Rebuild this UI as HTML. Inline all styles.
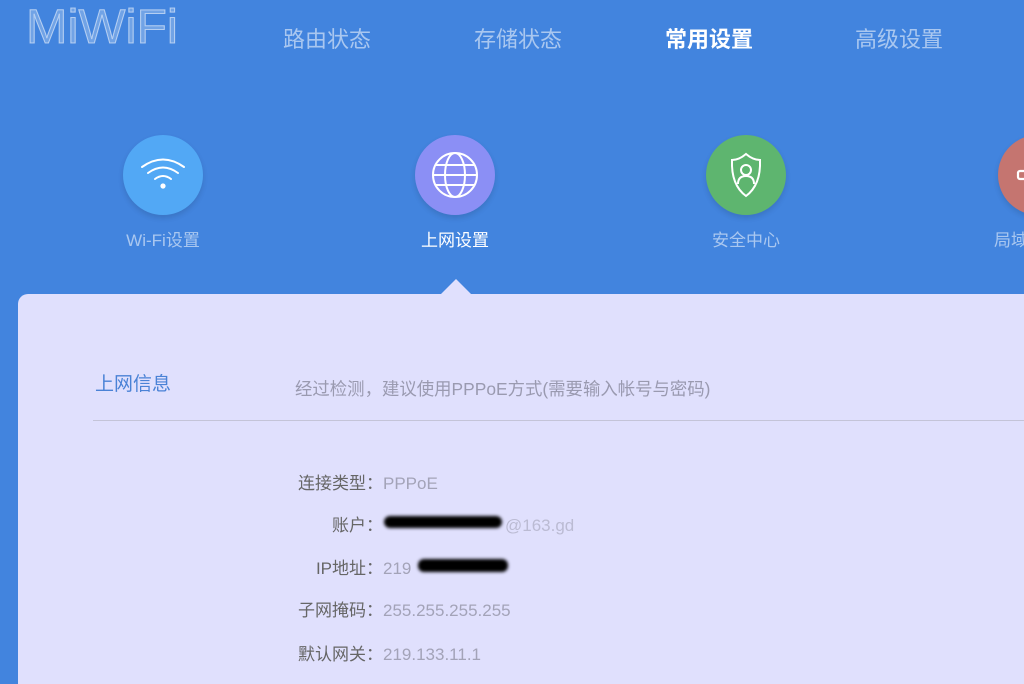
<!DOCTYPE html>
<html><head><meta charset="utf-8"><style>
*{margin:0;padding:0;box-sizing:border-box}
html,body{width:1024px;height:684px;overflow:hidden}
body{background:#4284de;font-family:"Liberation Sans","Noto Sans CJK SC",sans-serif;position:relative}
.abs{position:absolute}
.logo{left:26px;top:0px}
.nav{top:22px;font-size:22px;color:rgba(255,255,255,0.55);white-space:nowrap}
.c{width:80px;height:80px;border-radius:50%;top:135px;box-shadow:0 3px 6px rgba(0,0,0,0.12)}
.c svg{position:absolute;left:0;top:0}
.lbl{top:226px;font-size:17px;color:rgba(255,255,255,0.55);width:160px;text-align:center}
.panel{left:18px;top:294px;width:1006px;height:390px;background:#e0e0fd;border-radius:10px 0 0 0}
.arrow{left:440px;top:279px;width:0;height:0;border-left:16px solid transparent;border-right:16px solid transparent;border-bottom:16px solid #e0e0fd}
.row{font-size:17px;color:#666;white-space:nowrap}
.row .l{display:inline-block;width:93px;text-align:right}
.row .v{color:#a3a3b8}
.blob{background:#000;border-radius:6px;filter:blur(1.5px)}
.clip{left:0;top:0;width:1024px;height:684px;overflow:hidden}
</style></head><body>
<svg class="abs logo" width="170" height="50" viewBox="0 0 170 50"><text x="0" y="43" font-family="Liberation Sans" font-size="48" fill="rgba(255,255,255,0.25)" stroke="rgba(255,255,255,0.55)" stroke-width="1" textLength="152" lengthAdjust="spacingAndGlyphs">MiWiFi</text></svg>
<div class="abs nav" style="left:283px">路由状态</div>
<div class="abs nav" style="left:474px">存储状态</div>
<div class="abs nav" style="left:665px;color:#fff;font-weight:bold">常用设置</div>
<div class="abs nav" style="left:855px">高级设置</div>

<div class="abs c" style="left:123px;background:#52a8f5">
<svg width="80" height="80" viewBox="0 0 80 80" fill="none" stroke="#fff" stroke-width="2" stroke-linecap="round">
<path d="M19 32 Q40 17 61 32"/><path d="M25 38 Q40 27 55 38"/><path d="M32 44 Q40 38 48 44"/><circle cx="40" cy="51" r="1.6" fill="#fff"/></svg></div>
<div class="abs lbl" style="left:83px">Wi-Fi设置</div>

<div class="abs c" style="left:415px;background:#8b8ff5">
<svg width="80" height="80" viewBox="0 0 80 80" fill="none" stroke="#fff" stroke-width="2">
<circle cx="40" cy="40" r="22"/><ellipse cx="40" cy="40" rx="10" ry="22"/><path d="M18 40H62M21 30H59M21 50H59"/></svg></div>
<div class="abs lbl" style="left:375px;color:#fff">上网设置</div>

<div class="abs c" style="left:706px;background:#5eb56f">
<svg width="80" height="80" viewBox="0 0 80 80" fill="none" stroke="#fff" stroke-width="2">
<path d="M40 19 Q33 25 26 25 Q25 50 40 61 Q55 50 54 25 Q47 25 40 19Z"/><circle cx="40" cy="35" r="5"/><path d="M32 49 Q32 41 40 41 Q48 41 48 49"/></svg></div>
<div class="abs lbl" style="left:666px">安全中心</div>

<div class="abs clip">
<div class="abs c" style="left:998px;background:#c57570">
<svg width="80" height="80" viewBox="0 0 80 80" fill="none" stroke="#fff" stroke-width="2.2"><rect x="20" y="36" width="8" height="8" rx="2"/></svg></div>
<div class="abs lbl" style="left:994px;width:30px;overflow:hidden;text-align:left;white-space:nowrap">局域网设置</div>
</div>

<div class="abs arrow"></div>
<div class="abs panel"></div>
<div class="abs" style="left:95px;top:369px;font-size:19px;color:#4a82d6">上网信息</div>
<div class="abs" style="left:295px;top:376px;font-size:17.4px;color:#9a9ab0;white-space:nowrap">经过检测，建议使用PPPoE方式(需要输入帐号与密码)</div>
<div class="abs" style="left:93px;top:420px;width:931px;height:1px;background:#c4c4d8"></div>

<div class="abs row" style="left:290px;top:469px"><span class="l">连接类型：</span><span class="v">PPPoE</span></div>
<div class="abs row" style="left:290px;top:511px"><span class="l">账户：</span><span class="v" style="margin-left:122px;opacity:.6">@163.gd</span></div>
<div class="abs row" style="left:290px;top:554px"><span class="l">IP地址：</span><span class="v">219</span></div>
<div class="abs row" style="left:290px;top:596px"><span class="l">子网掩码：</span><span class="v">255.255.255.255</span></div>
<div class="abs row" style="left:290px;top:640px"><span class="l">默认网关：</span><span class="v">219.133.11.1</span></div>
<div class="abs blob" style="left:384px;top:516px;width:118px;height:12px"></div>
<div class="abs blob" style="left:418px;top:559px;width:90px;height:13px"></div>
</body></html>
